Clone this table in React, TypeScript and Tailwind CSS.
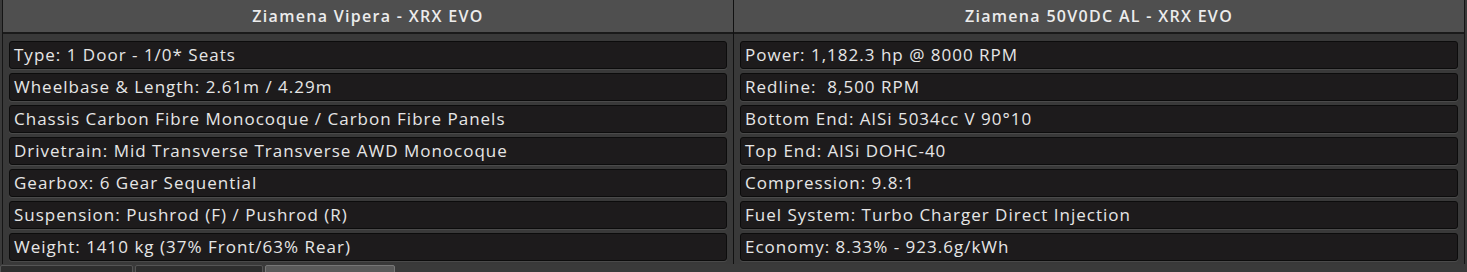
import React from 'react';

const CHASSIS = [
  'Type: 1 Door - 1/0* Seats',
  'Wheelbase & Length: 2.61m / 4.29m',
  'Chassis Carbon Fibre Monocoque / Carbon Fibre Panels',
  'Drivetrain: Mid Transverse Transverse AWD Monocoque',
  'Gearbox: 6 Gear Sequential',
  'Suspension: Pushrod (F) / Pushrod (R)',
  'Weight: 1410 kg (37% Front/63% Rear)',
];

const ENGINE = [
  'Power: 1,182.3 hp @ 8000 RPM',
  'Redline:  8,500 RPM',
  'Bottom End: AlSi 5034cc V 90°10',
  'Top End: AlSi DOHC-40',
  'Compression: 9.8:1',
  'Fuel System: Turbo Charger Direct Injection',
  'Economy: 8.33% - 923.6g/kWh',
];

const SpecColumn = ({ title, rows, last }: { title: string; rows: string[]; last?: boolean }) => (
  <div className={`flex-1 flex flex-col ${last ? '' : 'border-r border-[#111]'}`}>
    <div className="h-[34px] flex items-center justify-center bg-[#4f4f4f] border-b-2 border-[#1a1a1a] text-[16px] font-semibold tracking-[1.3px] text-[#ececec]">
      {title}
    </div>
    <div className="flex flex-col gap-[4px] px-[6px] pt-[7px] pb-[3px] bg-[#393939]">
      {rows.map((row) => (
        <div
          key={row}
          className="h-[28px] flex items-center px-[4px] bg-[#1d1b1c] border border-[#0c0c0c] rounded-[3px] shadow-[0_1px_0_#4a4a4a] text-[17px] tracking-[1px] text-[#e6e6e6] whitespace-pre"
        >
          {row}
        </div>
      ))}
    </div>
  </div>
);

export default function App() {
  return (
    <div className="w-[1467px] h-[272px] overflow-hidden bg-[#3a3a3a]" style={{ fontFamily: '"Open Sans", sans-serif' }}>
      <div className="flex border-l border-r border-[#151515] ml-[2px] mr-[2px]">
        <SpecColumn title="Ziamena Vipera - XRX EVO" rows={CHASSIS} />
        <SpecColumn title="Ziamena 50V0DC AL - XRX EVO" rows={ENGINE} last />
      </div>
      <div className="flex gap-[2px] pt-[1px]">
        <div className="w-[133px] h-[10px] bg-[#2e2e2e] border border-[#555] rounded-t-[2px]" />
        <div className="w-[128px] h-[10px] bg-[#2e2e2e] border border-[#555] rounded-t-[2px]" />
        <div className="w-[130px] h-[10px] bg-[#5a5a5a] border border-[#777] rounded-t-[2px]" />
      </div>
    </div>
  );
}
